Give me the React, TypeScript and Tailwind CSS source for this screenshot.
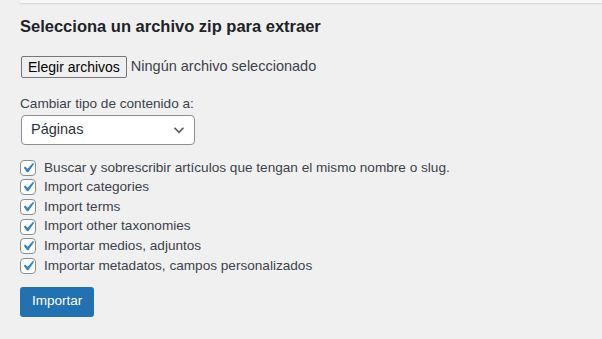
const options = [
  "Buscar y sobrescribir artículos que tengan el mismo nombre o slug.",
  "Import categories",
  "Import terms",
  "Import other taxonomies",
  "Importar medios, adjuntos",
  "Importar metadatos, campos personalizados",
];

function Check() {
  return (
    <span className="flex h-[16px] w-[16px] shrink-0 items-center justify-center rounded-[4px] border border-[#8c8f94] bg-white">
      <svg width="20" height="20" viewBox="0 0 20 20" className="-m-[3px] shrink-0">
        <path d="M14.83 4.89l1.34.94-5.81 8.38H9.02L5.78 9.67l1.34-1.25 2.57 2.4z" fill="#3582c4" />
      </svg>
    </span>
  );
}

export default function App() {
  return (
    <div className="h-[339px] w-[602px] overflow-hidden bg-[#f0f0f1] font-['Liberation_Sans',Arial,sans-serif] text-[#3c434a]">
      <div className="ml-[20px] h-[3px] bg-[#f6f6f7] shadow-[0_1px_2px_rgba(0,0,0,0.12)]" />
      <div className="px-[20px]">
        <h2 className="mt-[12px] text-[16.5px] font-bold leading-[22px] text-[#1d2327]">
          Selecciona un archivo zip para extraer
        </h2>

        <div className="mt-[19px] flex items-center">
          <span className="ml-[1px] flex h-[22px] items-center rounded-[2px] border border-[#767676] bg-[#efefef] px-[6px] text-[14px] text-black">
            Elegir archivos
          </span>
          <span className="ml-[4px] text-[14.5px] text-[#3c434a]">Ningún archivo seleccionado</span>
        </div>

        <div className="mt-[17px] text-[13.6px] leading-[18px]">Cambiar tipo de contenido a:</div>
        <div className="ml-[1px] mt-[2px] flex h-[30px] w-[174px] items-center justify-between rounded-[4px] border border-[#8c8f94] bg-white pl-[9px] pr-[8px] text-[14.5px] text-[#2c3338]">
          <span>Páginas</span>
          <svg width="14" height="14" viewBox="0 0 14 14" fill="none">
            <path d="M2.5 4.8l4.5 4.5 4.5-4.5" stroke="#50575e" strokeWidth="1.6" />
          </svg>
        </div>

        <div className="mt-[13px] flex flex-col">
          {options.map((o) => (
            <label key={o} className="flex h-[19.6px] items-center text-[13.6px]">
              <Check />
              <span className="ml-[8px]">{o}</span>
            </label>
          ))}
        </div>

        <button className="mt-[11px] flex h-[30px] items-center rounded-[3px] bg-[#2271b1] px-[12px] text-[13.5px] font-medium text-white">
          Importar
        </button>
      </div>
    </div>
  );
}
